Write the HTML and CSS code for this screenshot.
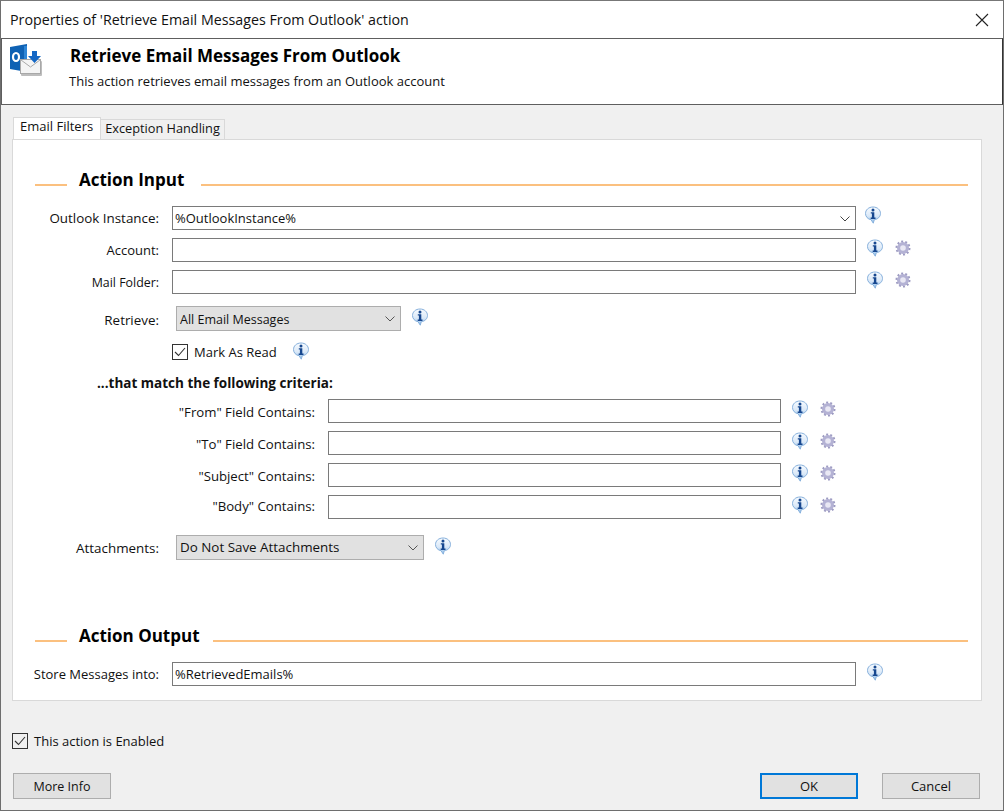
FILE: index.html
```html
<!DOCTYPE html>
<html>
<head>
<meta charset="utf-8">
<title>Properties</title>
<link rel="stylesheet" href="styles.css">
</head>
<body>
<svg class="icon-defs" width="0" height="0">
<defs>
<linearGradient id="bubble" x1="0" y1="0" x2="0" y2="1">
<stop offset="0" stop-color="#f7fbff"/>
<stop offset="0.55" stop-color="#dbe9f8"/>
<stop offset="1" stop-color="#8dbbe8"/>
</linearGradient>
<symbol id="info" viewBox="0 0 18 18">
<path d="M9 1C4.600 1 1.500 3.900 1.500 7.500c0 3.200 2.300 5.600 5.500 6.200l2.300 3.500.9-3.400c3.500-.5 6.300-3 6.300-6.300C16.500 3.900 13.400 1 9 1z" fill="url(#bubble)" stroke="#86b0dc" stroke-width="1"/>
<circle cx="9" cy="3.900" r="1.500" fill="#17478f"/>
<path d="M6.800 6.300h3.500v5.300h1.200v1.300H6.700v-1.300h1.200V7.600H6.800z" fill="#17478f"/>
</symbol>
<symbol id="gear" viewBox="0 0 16 16">
<circle cx="8" cy="8" r="6" fill="#b4b2d4"/>
<circle cx="8" cy="8" r="6.600" fill="none" stroke="#9d9bc2" stroke-width="1.800" stroke-dasharray="2 2.150"/>
<circle cx="8" cy="8" r="2.800" fill="#e9e8f4"/>
</symbol>
</defs>
</svg>

<div class="window">
<div class="titlebar">
<span>Properties of 'Retrieve Email Messages From Outlook' action</span>
<svg class="close" width="14" height="14" viewBox="0 0 14 14"><path d="M1 1l12 12M13 1L1 13" stroke="#222" stroke-width="1.100" fill="none"/></svg>
</div>

<div class="header">
<svg class="app-icon" width="34" height="34" viewBox="0 0 34 34">
<path d="M1 3L18 0v28L1 25z" fill="#0f62b4"/>
<path d="M18 2h-3v24h3z" fill="#2f86d6"/>
<ellipse cx="7" cy="13" rx="3" ry="4" fill="none" stroke="#fff" stroke-width="2.200"/>
<rect x="12" y="17" width="21" height="15" rx="1" fill="#bdbdbd"/>
<rect x="11.500" y="15.500" width="20" height="14" fill="#f4f4f4" stroke="#a8a8a8" stroke-width="1"/>
<path d="M12 16l9.500 7L31 16" fill="none" stroke="#a9a9a9" stroke-width="1"/>
<path d="M23 7h5v5h4l-6.500 7-6.500-7h4z" fill="#1467c4"/>
</svg>
<div class="header-text">
<div class="header-title">Retrieve Email Messages From Outlook</div>
<div class="header-desc">This action retrieves email messages from an Outlook account</div>
</div>
</div>

<div class="content">
<div class="tabs">
<div class="tab tab-active">Email Filters</div>
<div class="tab">Exception Handling</div>
</div>

<div class="panel">
<div class="section section-input"><span class="section-title">Action Input</span></div>

<div class="row row-first">
<label class="label label-wide">Outlook Instance:</label>
<div class="input input-wide input-combo">%OutlookInstance%
<svg class="chevron" width="10" height="6" viewBox="0 0 10 6"><path d="M.5.500L5 5l4.500-4.500" fill="none" stroke="#444"/></svg>
</div>
<svg class="ico ico-up"><use href="#info"/></svg>
</div>
<div class="row">
<label class="label">Account:</label>
<div class="input input-wide"></div>
<svg class="ico"><use href="#info"/></svg>
<svg class="ico-gear"><use href="#gear"/></svg>
</div>
<div class="row">
<label class="label label-narrow">Mail Folder:</label>
<div class="input input-wide"></div>
<svg class="ico"><use href="#info"/></svg>
<svg class="ico-gear"><use href="#gear"/></svg>
</div>

<div class="row row-select row-retrieve">
<label class="label label-retrieve">Retrieve:</label>
<div class="select select-retrieve">All Email Messages
<svg class="chevron" width="10" height="6" viewBox="0 0 10 6"><path d="M.5.500L5 5l4.500-4.500" fill="none" stroke="#555"/></svg>
</div>
<svg class="ico ico-select"><use href="#info"/></svg>
</div>

<div class="check-row check-mark">
<span class="check"><svg width="12" height="10" viewBox="0 0 12 10"><path d="M1 5l3.500 3.500L11 1" fill="none" stroke="#333" stroke-width="1.100"/></svg></span>
<span>Mark As Read</span>
<svg class="ico ico-mark"><use href="#info"/></svg>
</div>

<div class="criteria-title">...that match the following criteria:</div>

<div class="criteria">
<div class="row row-crit">
<label class="label label-crit">"From" Field Contains:</label>
<div class="input input-crit"></div>
<svg class="ico"><use href="#info"/></svg>
<svg class="ico-gear"><use href="#gear"/></svg>
</div>
<div class="row row-crit">
<label class="label label-crit">"To" Field Contains:</label>
<div class="input input-crit"></div>
<svg class="ico"><use href="#info"/></svg>
<svg class="ico-gear"><use href="#gear"/></svg>
</div>
<div class="row row-crit">
<label class="label label-crit">"Subject" Contains:</label>
<div class="input input-crit"></div>
<svg class="ico"><use href="#info"/></svg>
<svg class="ico-gear"><use href="#gear"/></svg>
</div>
<div class="row row-crit">
<label class="label label-crit label-body">"Body" Contains:</label>
<div class="input input-crit"></div>
<svg class="ico"><use href="#info"/></svg>
<svg class="ico-gear"><use href="#gear"/></svg>
</div>
</div>

<div class="row row-select row-attach">
<label class="label label-wide">Attachments:</label>
<div class="select select-attach">Do Not Save Attachments
<svg class="chevron" width="10" height="6" viewBox="0 0 10 6"><path d="M.5.500L5 5l4.500-4.500" fill="none" stroke="#555"/></svg>
</div>
<svg class="ico ico-select"><use href="#info"/></svg>
</div>

<div class="section section-output"><span class="section-title">Action Output</span></div>

<div class="row row-store">
<label class="label">Store Messages into:</label>
<div class="input input-wide">%RetrievedEmails%</div>
<svg class="ico"><use href="#info"/></svg>
</div>
</div>

<div class="check-row check-enabled">
<span class="check"><svg width="12" height="10" viewBox="0 0 12 10"><path d="M1 5l3.500 3.500L11 1" fill="none" stroke="#333" stroke-width="1.100"/></svg></span>
<span>This action is Enabled</span>
</div>

<div class="buttons">
<div class="btn btn-info">More Info</div>
<div class="btn-spacer"></div>
<div class="btn btn-ok">OK</div>
<div class="btn btn-cancel">Cancel</div>
</div>
</div>
</div>
</body>
</html>
```

FILE: styles.css
```css
html, body {
margin: 0;
height: 100%;
}

body {
font-family: "Open Sans", "Liberation Sans", sans-serif;
font-size: 13px;
color: #111;
background-color: #fff;
}

.icon-defs {
display: block;
height: 0;
}

.window {
box-sizing: border-box;
width: 1004px;
height: 811px;
border: 1px solid #6e6e6e;
border-top-color: #777;
background-color: #f0f0f0;
overflow: hidden;
}

.titlebar {
height: 37px;
background-color: #fff;
display: flex;
align-items: center;
justify-content: space-between;
padding: 0 14px 0 9px;
font-size: 14.25px;
}

.close {
display: block;
}

.header {
box-sizing: border-box;
height: 67px;
background-color: #fff;
border: 1px solid #5e5e5e;
border-right-color: #333;
display: flex;
}

.app-icon {
margin: 5px 0 0 7px;
}

.header-text {
margin-left: 27px;
}

.header-title {
font-weight: 700;
font-size: 17px;
margin-top: 6px;
line-height: 22px;
color: #000;
}

.header-desc {
font-size: 13px;
line-height: 20px;
margin: 4px 0 0 -1px;
}

.content {
padding: 12px 22px 0 11px;
}

.tabs {
display: flex;
align-items: flex-end;
height: 22px;
padding-left: 1px;
position: relative;
z-index: 1;
}

.tab {
box-sizing: border-box;
height: 20px;
line-height: 16px;
padding: 0 4px;
border: 1px solid #d9d9d9;
border-bottom: 0;
border-left: 0;
background-color: #f0f0f0;
font-size: 12.75px;
}

.tab-active {
height: 22px;
line-height: 16px;
padding: 0 7px 0 6px;
background-color: #fff;
border-left: 1px solid #d9d9d9;
font-size: 13px;
}

.panel {
box-sizing: border-box;
width: 970px;
height: 562px;
background-color: #fff;
border: 1px solid #d9d9d9;
}

.section {
display: flex;
align-items: center;
padding-left: 22px;
}

.section::before {
content: "";
width: 32px;
height: 2px;
margin-top: 10px;
background-color: #fbc07f;
}

.section::after {
content: "";
flex: 1;
height: 2px;
margin-top: 10px;
margin-right: 13px;
background-color: #fbc07f;
}

.section-title {
font-size: 17px;
font-weight: 700;
color: #000;
padding: 0 13px 0 12px;
line-height: 22px;
}

.section-input {
margin-top: 29px;
}

.section-input .section-title {
padding-right: 17px;
}

.section-output {
margin-top: 65px;
}

.row {
display: flex;
align-items: center;
height: 24px;
margin-top: 8px;
}

.row-first {
margin-top: 15px;
}

.label {
width: 146px;
text-align: right;
flex-shrink: 0;
}

.label-wide {
font-size: 13.4px;
}

.label-narrow {
font-size: 12.4px;
}

.label-retrieve {
font-size: 13.4px;
padding-top: 2px;
}

.input {
box-sizing: border-box;
height: 24px;
line-height: 22px;
padding-left: 2px;
background-color: #fff;
border: 1px solid #7a7a7a;
margin-left: 13px;
flex-shrink: 0;
}

.input-wide {
width: 684px;
}

.input-combo {
position: relative;
}

.chevron {
position: absolute;
right: 5px;
top: 9px;
}

.ico {
width: 18px;
height: 18px;
margin: -5px 0 0 10px;
flex-shrink: 0;
}

.ico-up {
margin-top: -6px;
margin-left: 8px;
}

.ico-gear {
width: 16px;
height: 16px;
margin: -5px 0 0 11px;
flex-shrink: 0;
}

.row-select {
height: 25px;
}

.select {
box-sizing: border-box;
height: 25px;
line-height: 23px;
padding-left: 3px;
margin-left: 17px;
background-color: #e1e1e1;
border: 1px solid #adadad;
position: relative;
flex-shrink: 0;
}

.select-retrieve {
width: 225px;
font-size: 12.5px;
line-height: 25px;
}

.select-attach {
width: 248px;
font-size: 13.4px;
}

.row-retrieve {
margin-top: 12px;
}

.ico-select {
margin-left: 10px;
margin-top: -4px;
}

.check-row {
display: flex;
align-items: center;
}

.check {
box-sizing: border-box;
width: 16px;
height: 16px;
margin-right: 6px;
border: 1px solid #333;
background-color: #fff;
display: flex;
align-items: center;
justify-content: center;
flex-shrink: 0;
}

.check-mark {
margin: 13px 0 0 159px;
height: 16px;
line-height: 18px;
}

.ico-mark {
margin-left: 15px;
margin-top: -2px;
}

.criteria-title {
font-weight: 700;
font-size: 13.5px;
margin: 14px 0 0 84px;
line-height: 18px;
}

.criteria {
margin-top: 7px;
}

.row-crit {
margin-top: 8px;
}

.row-crit:first-child {
margin-top: 0;
}

.label-crit {
width: 302px;
font-size: 13.2px;
padding-top: 2px;
}

.label-body {
padding-top: 0;
padding-bottom: 2px;
}

.input-crit {
width: 453px;
}

.row-attach {
margin-top: 16px;
}

.row-store {
margin-top: 15px;
}

.check-enabled {
margin: 32px 0 0 0;
height: 16px;
}

.check-enabled .check {
background-color: transparent;
}

.buttons {
display: flex;
margin-top: 24px;
padding-left: 1px;
}

.btn {
box-sizing: border-box;
width: 98px;
height: 26px;
line-height: 24px;
text-align: center;
background-color: #e1e1e1;
border: 1px solid #adadad;
}

.btn-info {
font-size: 12.5px;
line-height: 25px;
}

.btn-spacer {
flex: 1;
}

.btn-ok {
border: 2px solid #0078d7;
line-height: 22px;
margin-right: 24px;
}

.btn-cancel {
margin-right: 1px;
}
```
